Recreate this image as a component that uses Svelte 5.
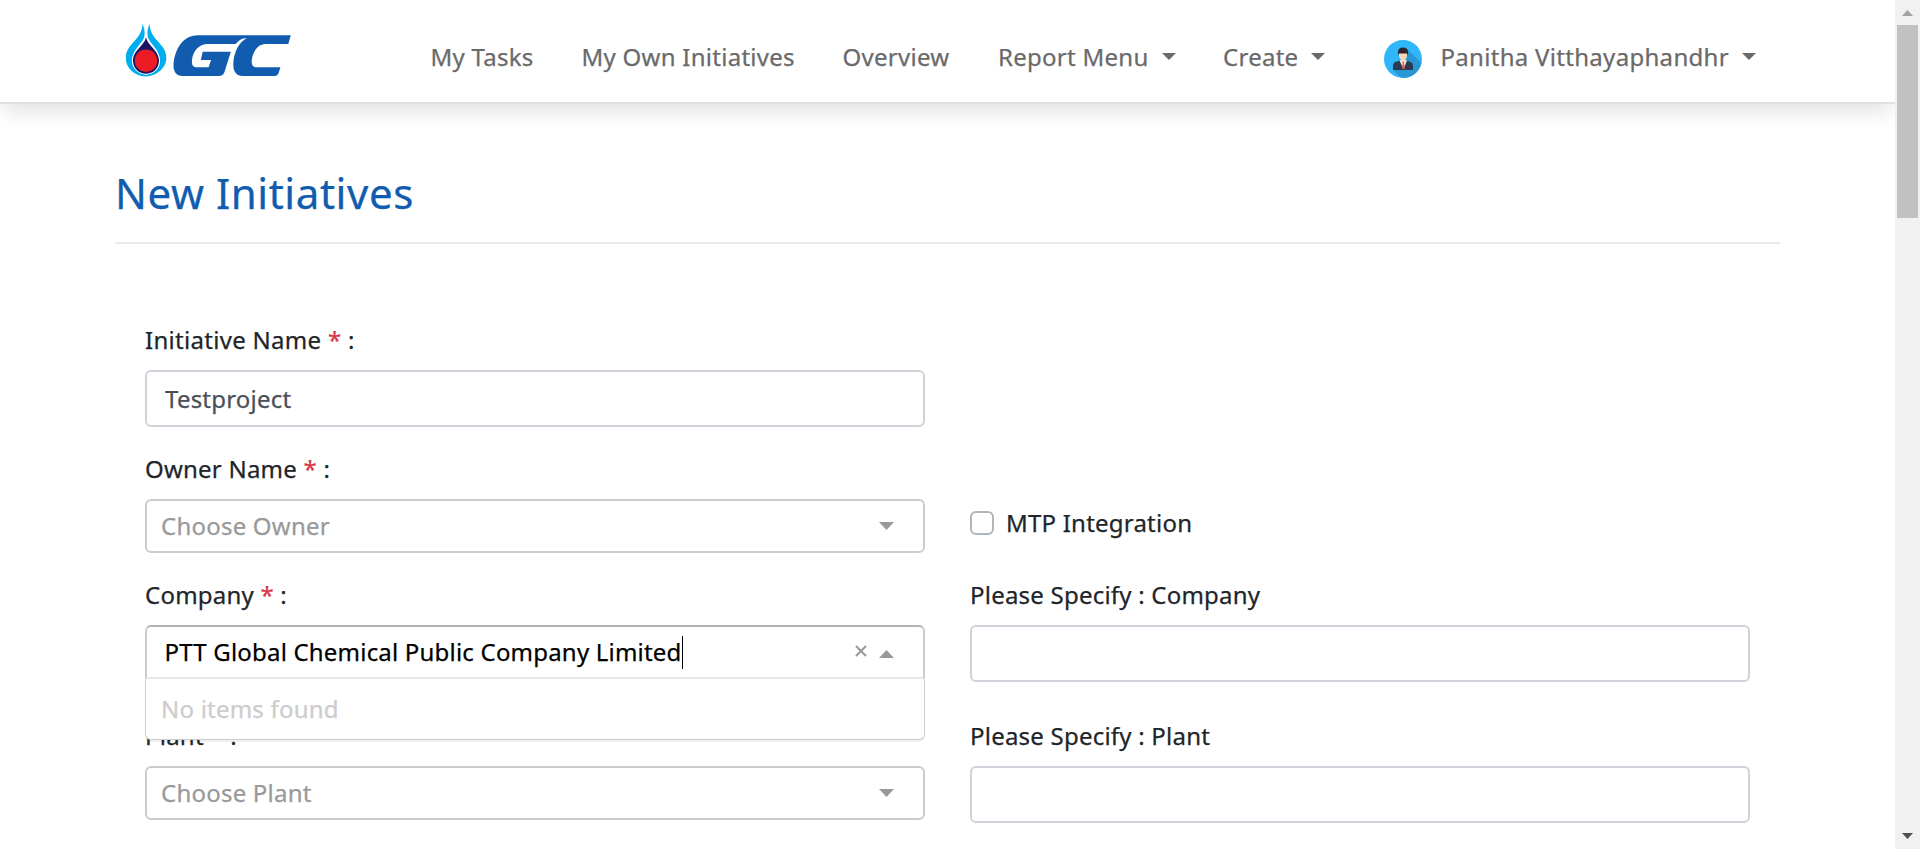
<script>
  const links = [
    { text: 'My Tasks', width: 151 },
    { text: 'My Own Initiatives', width: 261 },
    { text: 'Overview', width: 155.5 },
    { text: 'Report Menu', caret: true, width: 225 },
    { text: 'Create', caret: true, width: 160.5 }
  ];
  let name = $state('Testproject');
  let company = 'PTT Global Chemical Public Company Limited';
</script>

{#snippet arrow(up)}
  <svg class="arrow" width="15" height="8" viewBox="0 0 15 8"><path fill="#999" d={up ? 'M0 8 7.5 0 15 8z' : 'M0 0h15L7.5 8z'} /></svg>
{/snippet}

{#snippet caret()}
  <svg class="caret" width="14" height="7" viewBox="0 0 14 7"><path fill="#6a6a6a" d="M0 0h14L7 7z" /></svg>
{/snippet}

<div class="screen">
  <div class="page">
    <header>
      <svg class="logo" width="168" height="56" viewBox="0 0 168 56">
        <path fill="#00aeef" d="M17.300 0C17.500 7 14 12 9 17.500C4 23 0.800 27 0.800 34C0.800 44 9 52 20.500 52.500C32 52 41.300 44 41.300 34C41.300 27 38 23 33 17.500C28 12 24.600 7 24.800 0C22 5 22 10 23.200 14C24.800 19 34.800 26 34.800 36.500A13.800 13.800 0 0 1 7.200 36.500C7.200 26 17.300 19 18.900 14C20.100 10 20 5 17.300 0z" />
        <path fill="#fff" d="M21 9C21.500 19 35 25 35 36.700A14 14 0 0 1 7 36.700C7 25 20.500 19 21 9z" />
        <path fill="#1b1464" d="M21 12.500C21.500 21 34 26 34 36.700A13 13 0 0 1 8 36.700C8 26 20.500 21 21 12.500z" />
        <circle cx="21" cy="36.700" r="11.200" fill="#ed1c24" />
        <path fill="#115cae" d="M73.300 11.200H165.800L163.300 20H140.500C133 20 127.500 28 126.800 36C126.500 41 127.500 43.300 132 43.300H155.400L153.600 49Q152.500 52 149.500 52H118C110 52 107.500 46 108.500 37C109.500 28 114 18 121.700 14.300C116 13.800 113 17.500 110.700 20H83C73.500 20 68 27 67 36C66.500 41 68 43.300 72 43.300H83.600L86 36H75.800L77.700 27.700H105.800L99.500 48Q98 52 94 52H57.500C50 52 47.500 46 48.800 37C51.500 23 58.500 11.200 73.300 11.200z" />
      </svg>
      <nav>
        {#each links as link}
          <a href="#top" style:width="{link.width}px">{link.text}{#if link.caret}{@render caret()}{/if}</a>
        {/each}
        <a href="#top" class="user">
          <svg class="avatar" width="38" height="38" viewBox="0 0 38 38">
            <circle cx="19" cy="19" r="19" fill="#30b6fb" />
            <path fill="#2997d3" d="M23 9 37.400 23A19 19 0 0 1 19 38Q15 37 9 30L14 25z" />
            <path fill="#2b3b50" d="M9 30v-4q0-4 4-4.500l6-2 6 2q4 .5 4 4.500v4z" />
            <path fill="#f3efe8" d="m15.500 20.500 3.500-1 4 1L19.500 29z" />
            <path fill="#e25a5a" d="m18 21.500h2.500l-.5 2 1 5h-3l.6-5z" />
            <path fill="#f5d8b6" d="M15 12h8v4q-.5 3-2.500 4v1.500h-3V20q-2-1-2.500-4z" />
            <path fill="#2b292b" d="M14 15.500V12q0-4.500 5-4.500t5 4.500v3.500l-1-2h-8z" />
          </svg>
          <span>Panitha Vitthayaphandhr</span>{@render caret()}
        </a>
      </nav>
    </header>

    <main>
      <h1>New Initiatives</h1>
      <div class="form">
        <div class="row first">
          <div class="field">
            <label for="name" class="wide">Initiative Name <b>*</b> :</label>
            <input id="name" class="box" bind:value={name} />
          </div>
        </div>
        <div class="row owner">
          <div class="field">
            <div class="label">Owner Name <b>*</b> :</div>
            <div class="select"><span>Choose Owner</span>{@render arrow(false)}</div>
          </div>
          <div class="check"><i></i><span>MTP Integration</span></div>
        </div>
        <div class="row company">
          <div class="field open">
            <div class="label">Company <b>*</b> :</div>
            <div class="select active">
              <span class="typed">{company}</span><i class="cursor"></i>
              <svg class="clear" width="12" height="12" viewBox="0 0 12 12"><path d="m1 1 10 10M11 1 1 11" stroke="#999" stroke-width="2" /></svg>
              {@render arrow(true)}
            </div>
            <div class="menu">No items found</div>
          </div>
          <div class="field">
            <label for="oc">Please Specify : Company</label>
            <input id="oc" class="box" />
          </div>
        </div>
        <div class="row">
          <div class="field">
            <div class="label">Plant <b>*</b> :</div>
            <div class="select"><span>Choose Plant</span>{@render arrow(false)}</div>
          </div>
          <div class="field">
            <label for="op">Please Specify : Plant</label>
            <input id="op" class="box" />
          </div>
        </div>
      </div>
    </main>
  </div>
  <aside class="scrollbar">
    <svg width="11" height="6" viewBox="0 0 11 6"><path fill="#a3a3a3" d="M0 6 5.500 0 11 6z" /></svg>
    <div class="thumb"></div>
    <svg class="down" width="11" height="6" viewBox="0 0 11 6"><path fill="#505050" d="M0 0h11L5.500 6z" /></svg>
  </aside>
</div>

<style>
  :global(body) { margin: 0; overflow: hidden; }
  * { box-sizing: border-box; }
  .screen {
    display: flex; width: 1920px; height: 849px; overflow: hidden; background: #fff;
    font: 24px/36px "Noto Sans", sans-serif; color: #212529;
    letter-spacing: .22px; -webkit-text-stroke: .25px;
  }
  .page { width: 1895px; overflow: hidden; }
  header {
    display: flex; height: 104px; padding-left: 125px;
    border-bottom: 2px solid #dee2e6; box-shadow: 0 10px 20px -3px rgba(0, 0, 0, .12);
  }
  .logo { flex: none; margin-top: 24px; }
  nav { display: flex; margin-left: 137.5px; padding-top: 39px; white-space: nowrap; letter-spacing: .27px; }
  a { display: flex; flex: none; color: #6a6a6a; text-decoration: none; }
  .caret { margin: 14px 0 0 13px; }
  .avatar { margin: 1px 19px 0 0; }
  .user { letter-spacing: .3px; }
  main { padding: 64px 115px 0; }
  h1 {
    margin: 0; height: 76px; border-bottom: 2px solid #e9e9e9;
    font-size: 42px; line-height: 50px; font-weight: 400; color: #115cae; letter-spacing: .56px;
  }
  .form { padding: 78px 30px 0; }
  .row { display: flex; justify-content: space-between; margin-bottom: 24px; }
  .company { margin-bottom: 36px; }
  .field { position: relative; width: 780px; }
  label, .label { display: block; margin-bottom: 12px; }
  .wide { letter-spacing: .29px; }
  b { font-weight: 400; color: #dc3545; }
  .box {
    display: block; width: 100%; height: 57px; padding: 0 18px; border: 2px solid #ced4da;
    border-radius: 6px; font: inherit; letter-spacing: inherit; color: #495057; background: #fff; outline: none;
  }
  .select {
    display: flex; align-items: center; height: 54px; padding: 0 29px 0 14px;
    border: 2px solid #ccc; border-radius: 6px; color: #999; background: #fff;
  }
  .select .arrow { margin-left: auto; }
  .active {
    border-color: #b3b3b3 #ccc #e6e6e6; border-radius: 6px 6px 0 0; color: #000; padding-left: 17.5px;
  }
  .select.active .arrow { margin: 3px 0 0 12px; }
  .typed { flex: none; width: 517.5px; white-space: nowrap; letter-spacing: .2px; }
  .cursor { width: 1px; height: 33px; background: #000; }
  .clear { margin: -3px 0 0 auto; }
  .menu {
    position: absolute; z-index: 2; top: 102px; left: 0; width: 780px; height: 61px; padding: 12px 15px;
    border: 1px solid #ccc; border-top: 0; border-radius: 0 0 6px 6px; background: #fff; color: #ccc;
    box-shadow: 0 2px 0 rgba(0, 0, 0, .06);
  }
  .check { display: flex; width: 780px; gap: 12px; padding-top: 54px; }
  .check i { width: 24px; height: 24px; margin-top: 6px; border: 2px solid #adb5bd; border-radius: 6px; }
  .scrollbar { display: flex; flex-direction: column; align-items: center; width: 25px; background: #f1f1f1; padding: 10px 0; }
  .scrollbar svg { flex: none; }
  .thumb { width: 21px; height: 193px; margin-top: 9px; background: #c1c1c1; }
  .down { margin-top: auto; }
</style>
